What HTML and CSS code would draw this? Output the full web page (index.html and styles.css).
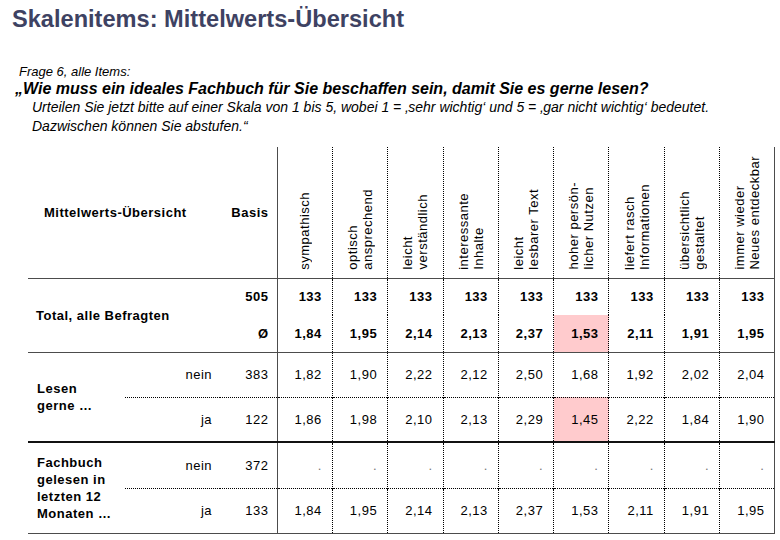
FILE: index.html
```html
<!DOCTYPE html>
<html lang="de">
<head>
<meta charset="utf-8">
<title>Skalenitems: Mittelwerts-Übersicht</title>
<link rel="stylesheet" href="styles.css">
</head>
<body>
<div class="page">
  <h1 class="title">Skalenitems: Mittelwerts-Übersicht</h1>
  <div class="intro">
    <p class="frage">Frage 6, alle Items:</p>
    <p class="quote">„Wie muss ein ideales Fachbuch für Sie beschaffen sein, damit Sie es gerne lesen?</p>
    <p class="hint">Urteilen Sie jetzt bitte auf einer Skala von 1 bis 5, wobei 1 = ‚sehr wichtig‘ und 5 = ‚gar nicht wichtig‘ bedeutet.<br>Dazwischen können Sie abstufen.“</p>
  </div>
  <table class="grid">
    <colgroup>
      <col class="c-label"><col class="c-sub"><col class="c-basis">
      <col class="c-data" span="9">
    </colgroup>
    <thead>
      <tr class="r-head">
        <th colspan="2" class="h-title">Mittelwerts-Übersicht</th>
        <th class="h-basis">Basis</th>
        <th class="item first"><span class="vt">sympathisch</span></th>
        <th class="item"><span class="vt">optisch<br>ansprechend</span></th>
        <th class="item"><span class="vt">leicht<br>verständlich</span></th>
        <th class="item"><span class="vt">interessante<br>Inhalte</span></th>
        <th class="item"><span class="vt">leicht<br>lesbarer Text</span></th>
        <th class="item"><span class="vt">hoher persön-<br>licher Nutzen</span></th>
        <th class="item"><span class="vt">liefert rasch<br>Informationen</span></th>
        <th class="item"><span class="vt">übersichtlich<br>gestaltet</span></th>
        <th class="item last"><span class="vt">immer wieder<br>Neues entdeckbar</span></th>
      </tr>
    </thead>
    <tbody class="bold">
      <tr class="r-t1">
        <td colspan="2" rowspan="2" class="label">Total, alle Befragten</td>
        <td class="basis">505</td>
        <td class="val first">133</td><td class="val">133</td><td class="val">133</td><td class="val">133</td><td class="val">133</td><td class="val">133</td><td class="val">133</td><td class="val">133</td><td class="val last">133</td>
      </tr>
      <tr class="r-t2">
        <td class="basis">Ø</td>
        <td class="val first">1,84</td><td class="val">1,95</td><td class="val">2,14</td><td class="val">2,13</td><td class="val">2,37</td><td class="val hi">1,53</td><td class="val">2,11</td><td class="val">1,91</td><td class="val last">1,95</td>
      </tr>
    </tbody>
    <tbody class="sec">
      <tr class="r-a">
        <td rowspan="2" class="label">Lesen gerne&nbsp;…</td>
        <td class="sub">nein</td>
        <td class="basis">383</td>
        <td class="val first">1,82</td><td class="val">1,90</td><td class="val">2,22</td><td class="val">2,12</td><td class="val">2,50</td><td class="val">1,68</td><td class="val">1,92</td><td class="val">2,02</td><td class="val last">2,04</td>
      </tr>
      <tr class="r-b">
        <td class="sub">ja</td>
        <td class="basis">122</td>
        <td class="val first">1,86</td><td class="val">1,98</td><td class="val">2,10</td><td class="val">2,13</td><td class="val">2,29</td><td class="val hi">1,45</td><td class="val">2,22</td><td class="val">1,84</td><td class="val last">1,90</td>
      </tr>
    </tbody>
    <tbody class="sec strong">
      <tr class="r-a">
        <td rowspan="2" class="label">Fachbuch gelesen in letzten 12 Monaten&nbsp;…</td>
        <td class="sub">nein</td>
        <td class="basis">372</td>
        <td class="val dot first">.</td><td class="val dot">.</td><td class="val dot">.</td><td class="val dot">.</td><td class="val dot">.</td><td class="val dot">.</td><td class="val dot">.</td><td class="val dot">.</td><td class="val dot last">.</td>
      </tr>
      <tr class="r-b end">
        <td class="sub">ja</td>
        <td class="basis">133</td>
        <td class="val first">1,84</td><td class="val">1,95</td><td class="val">2,14</td><td class="val">2,13</td><td class="val">2,37</td><td class="val">1,53</td><td class="val">2,11</td><td class="val">1,91</td><td class="val last">1,95</td>
      </tr>
    </tbody>
  </table>
</div>
</body>
</html>
```

FILE: styles.css
```css
* { box-sizing: border-box; }

html, body {
  margin: 0;
  padding: 0;
  background: #ffffff;
}

body {
  font-family: "Liberation Sans", Arial, sans-serif;
  color: #000000;
  width: 780px;
  height: 540px;
  overflow: hidden;
}

.page {
  padding-top: 5px;
}

.title {
  margin: 0 0 0 12px;
  font-size: 23.6px;
  line-height: 28px;
  font-weight: bold;
  color: #3e4262;
}

.intro {
  margin-top: 31px;
}

.intro p {
  margin: 0;
}

.frage {
  padding-left: 19px;
  font-style: italic;
  font-size: 13px;
  line-height: 15px;
}

.quote {
  padding-left: 15px;
  font-style: italic;
  font-weight: bold;
  font-size: 16px;
  line-height: 19px;
}

.hint {
  padding-left: 32px;
  font-style: italic;
  font-size: 14px;
  line-height: 19px;
}

/* ---------- table ---------- */
.grid {
  margin: 11px 0 0 28px;
  width: 747px;
  table-layout: fixed;
  border-collapse: collapse;
  font-size: 13px;
  letter-spacing: 0.5px;
}

.c-label { width: 97px; }
.c-sub { width: 95px; }
.c-basis { width: 57px; }
.c-data { width: 55.33px; }

.grid th,
.grid td {
  padding: 0;
  font-weight: normal;
}

.r-head { height: 131px; }
.r-t1, .r-t2 { height: 37px; }
.r-a, .r-b { height: 45px; }
.strong .r-a { height: 46px; }

.r-head th {
  border-bottom: 1px solid #4c4c4c;
}

.h-title {
  text-align: left;
  padding-left: 16px !important;
  font-weight: bold !important;
  vertical-align: middle;
}

.h-basis {
  text-align: right;
  padding-right: 8px !important;
  font-weight: bold !important;
  vertical-align: middle;
}

.item {
  vertical-align: bottom;
  text-align: center;
  line-height: 0;
  padding-bottom: 8px !important;
}

.vt {
  display: inline-block;
  vertical-align: top;
  writing-mode: vertical-rl;
  transform: rotate(180deg);
  white-space: nowrap;
  text-align: start;
  line-height: 15px;
}

.item,
.val {
  border-left: 1px dotted #000000;
}

.item.first,
.val.first {
  border-left: 1px solid #4c4c4c;
}

.item.last,
.val.last {
  border-right: 1px solid #4c4c4c;
}

.bold td {
  font-weight: bold;
}

.label {
  text-align: left;
  vertical-align: middle;
  padding-left: 9px !important;
  line-height: 17px;
}

.bold .label {
  padding-left: 8px !important;
}

.sec .label {
  font-weight: bold;
}

.sub {
  text-align: right;
  padding-right: 8px !important;
}

.basis {
  text-align: right;
  padding-right: 8px !important;
}

.val {
  text-align: right;
  padding-right: 10px !important;
}

.dot {
  color: #777777;
}

.hi {
  background: #ffcbcd;
}

.sec .r-a td {
  border-top: 1px solid #4c4c4c;
}

.sec.strong .r-a td {
  border-top: 2px solid #111111;
}

.sec .r-b td {
  border-top: 1px dotted #000000;
}

.r-b.end td {
  border-bottom: 1px solid #4c4c4c;
}

.sec .label {
  border-bottom: 1px solid #4c4c4c;
}
```
